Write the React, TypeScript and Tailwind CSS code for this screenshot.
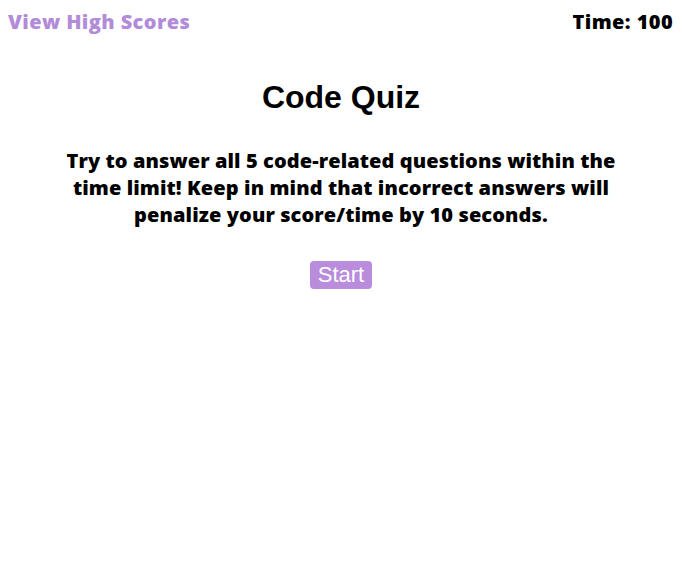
export default function App() {
  return (
    <div className="min-h-screen bg-white text-black">
      <header className="flex items-center justify-between px-2 pt-[9px] font-['Open_Sans',sans-serif] text-[20px] font-extrabold leading-[26px] tracking-[0.4px]">
        <a href="#" className="text-[#b38cd9]">View High Scores</a>
        <span className="pr-[1px]">Time: 100</span>
      </header>
      <main className="flex flex-col items-center">
        <h1 className="mt-[44px] font-['Liberation_Sans',Arial,sans-serif] text-[32px] font-bold leading-[37px]">Code Quiz</h1>
        <p className="mt-[31px] w-[580px] text-center font-['Open_Sans',sans-serif] text-[20px] font-extrabold leading-[27px] tracking-[0.1px]">
          Try to answer all 5 code-related questions within the time limit! Keep in mind that incorrect answers will penalize your score/time by 10 seconds.
        </p>
        <button className="mt-[33px] rounded-[4px] bg-[#b98ddb] px-[8px] font-['Liberation_Sans',Arial,sans-serif] text-[22px] leading-[28px] text-white">
          Start
        </button>
      </main>
    </div>
  );
}
